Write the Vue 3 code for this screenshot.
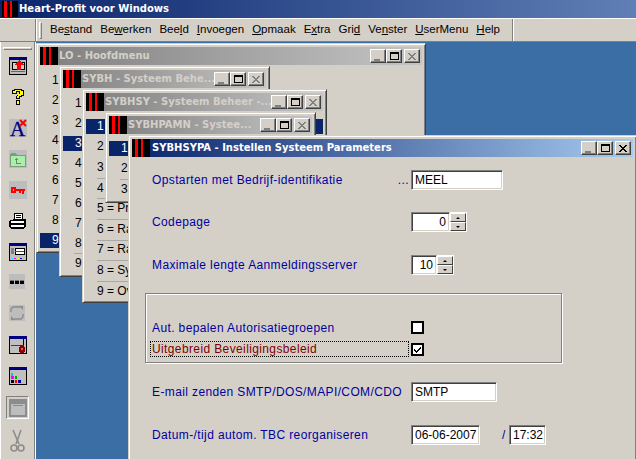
<script setup>
const menus = [
  ['Be', 's', 'tand'], ['Be', 'w', 'erken'], ['Bee', 'l', 'd'], ['', 'I', 'nvoegen'], ['', 'O', 'pmaak'],
  ['E', 'x', 'tra'], ['Gri', 'd', ''], ['Ve', 'n', 'ster'], ['', 'U', 'serMenu'], ['', 'H', 'elp']
]
const nums = (active, seps = [], extra = {}) =>
  [1, 2, 3, 4, 5, 6, 7, 8, 9].map(n => ({ t: extra[n] || String(n), on: n === active, sep: seps.includes(n) }))
const windows = [
  { id: 'lo', title: 'LO - Hoofdmenu', rows: nums(9) },
  { id: 'sybh', title: 'SYBH - Systeem Behe...', rows: nums(3, [9]) },
  { id: 'sybhsy', title: 'SYBHSY - Systeem Beheer -...', rows: nums(1, [4, 5, 6, 7, 8, 9], { 5: '5 = Pr', 6: '6 = Ra', 7: '7 = Ra', 8: '8 = Sy', 9: '9 = Ov' }) },
  { id: 'pamn', title: 'SYBHPAMN - Systee...', rows: nums(1, [3]).slice(0, 3) }
]
</script>

<template>
  <div class="screen">
    <header class="apptitle">
      <span class="logo small"><i></i><i></i></span>
      <span class="apptext">Heart-Profit voor Windows</span>
    </header>

    <nav class="menubar">
      <div class="menu-gutter"></div>
      <div class="menu-main">
        <span class="grip"></span>
        <span v-for="m in menus" :key="m.join('')" class="menu">{{ m[0] }}<u>{{ m[1] }}</u>{{ m[2] }}</span>
      </div>
      <div class="menu-rest"></div>
    </nav>

    <div class="workspace">
      <aside class="toolbar">
        <span class="hgrip"></span>
        <svg class="ico i1" viewBox="0 0 18 18" shape-rendering="crispEdges">
          <rect width="18" height="18" fill="#000"/><rect x="1" y="1" width="16" height="16" fill="#bdbdbd"/>
          <rect width="18" height="3" fill="#000080"/>
          <rect x="3" y="5" width="13" height="8" fill="#000"/><rect x="4" y="6" width="11" height="6" fill="#d4d0c8"/>
          <path d="M10 3l5 5h-3v5H8V8H5z" fill="#f00"/>
          <rect x="2" y="14" width="14" height="1" fill="#666"/>
        </svg>
        <svg class="ico i2" viewBox="0 0 18 18" shape-rendering="crispEdges">
          <path d="M5 1h8v1h2v6h-2v1h-2v2H7V8h1V7h2V4H8v2H3V2h2zM7 12h4v5H7z" fill="#000"/>
          <path d="M6 2h6v1h2v4h-2v1h-2v2H8V8h1V6h2V3H7v2H4V3h2zM8 13h2v3H8z" fill="#ff0"/>
        </svg>
        <svg class="ico i3" viewBox="0 0 18 18">
          <rect width="18" height="18" fill="#bdbdbd"/>
          <text x="1" y="17" class="glyph">A</text>
          <path d="M11 1l6 6M17 1l-6 6" stroke="#f00" stroke-width="2"/>
        </svg>
        <svg class="ico i4" viewBox="0 0 18 18" shape-rendering="crispEdges">
          <rect width="18" height="18" fill="#bdbdbd"/>
          <path d="M1 4h1V3h5v1h1v1h9v12H1z" fill="#7f9a7f"/><path d="M2 6h14v10H2z" fill="#a8f0a8"/>
          <path d="M7 8h1v1h1v1H8v3h4v1H7v-4H6v-1h1z" fill="#6a8a6a"/>
        </svg>
        <svg class="ico i5" viewBox="0 0 18 18" shape-rendering="crispEdges">
          <rect width="18" height="18" fill="#bdbdbd"/>
          <path d="M2 6h5v2h9v2h-1v3h-2v-3h-1v2h-2v-2H7v2H2zM4 8v2h1V8z" fill="#f00" fill-rule="evenodd"/>
        </svg>
        <svg class="ico i6" viewBox="0 0 18 18" shape-rendering="crispEdges">
          <path d="M5 1h9v6h3v8l-3 2H3l-3-2V9l5-2z" fill="#000"/>
          <path d="M6 2h7v5H6zM2 9h13v2H2zM2 13h13v2H2z" fill="#fff"/>
          <path d="M7 3h5v1H7zM7 5h5v1H7z" fill="#000"/>
        </svg>
        <svg class="ico i7" viewBox="0 0 18 18" shape-rendering="crispEdges">
          <rect width="18" height="18" fill="#000"/><rect x="1" y="3" width="16" height="14" fill="#c0c0c0"/>
          <rect width="18" height="3" fill="#000080"/>
          <rect x="6" y="5" width="10" height="7" fill="#000"/><rect x="7" y="6" width="8" height="5" fill="#fff"/>
          <rect x="2" y="5" width="3" height="6" fill="#808080"/>
          <rect x="6" y="8" width="9" height="1" fill="#f00"/>
          <path d="M2 15h2v1H2z" fill="#0ff"/><path d="M5 15h2v1H5z" fill="#f0f"/><path d="M8 15h2v1H8z" fill="#ff0"/><path d="M11 15h2v1h-2z" fill="#00f"/>
        </svg>
        <svg class="ico i8" viewBox="0 0 18 18" shape-rendering="crispEdges">
          <rect y="0" width="16" height="15" fill="#bdbdbd"/>
          <rect x="1" y="6" width="4" height="4" fill="#000"/><rect x="6" y="6" width="4" height="4" fill="#000"/><rect x="11" y="6" width="4" height="4" fill="#000"/>
          <rect x="1" y="6" width="4" height="1" fill="#777"/><rect x="6" y="6" width="4" height="1" fill="#777"/><rect x="11" y="6" width="4" height="1" fill="#777"/>
        </svg>
        <svg class="ico i9" viewBox="0 0 18 18">
          <rect width="16" height="16" fill="#bdbdbd"/>
          <path d="M2 7V4l2-2h7M14 9v3l-2 2H5" fill="none" stroke="#8c8c8c" stroke-width="1.4"/>
          <path d="M10 1l4 0v4zM6 15l-4 0v-4z" fill="#8c8c8c"/>
        </svg>
        <svg class="ico i10" viewBox="0 0 18 18" shape-rendering="crispEdges">
          <rect width="18" height="18" fill="#000"/><rect x="1" y="3" width="16" height="14" fill="#c0c0c0"/>
          <rect width="18" height="3" fill="#000080"/>
          <rect x="2" y="9" width="13" height="1" fill="#d00000"/>
          <rect x="14" y="3" width="1" height="8" fill="#000"/>
          <path d="M11 9h4v2h1v5h-1v1h-4v-1h-1v-5h1z" fill="#900000"/>
          <rect x="12" y="12" width="2" height="2" fill="#f06060"/>
        </svg>
        <svg class="ico i11" viewBox="0 0 18 18" shape-rendering="crispEdges">
          <rect width="18" height="18" fill="#000"/><rect x="1" y="3" width="16" height="14" fill="#c0c0c0"/>
          <rect width="18" height="2" fill="#000080"/>
          <rect x="2" y="6" width="2" height="3" fill="#0cc"/>
          <rect x="2" y="9" width="3" height="3" fill="#f0f"/><rect x="6" y="9" width="2" height="3" fill="#0a0"/>
          <rect x="2" y="13" width="3" height="3" fill="#000"/><rect x="6" y="13" width="2" height="3" fill="#f00"/><rect x="9" y="13" width="3" height="3" fill="#00a"/>
        </svg>
        <span class="pressed">
          <svg class="ico12" viewBox="0 0 18 18" shape-rendering="crispEdges">
            <rect width="18" height="18" fill="#8c8c8c"/><rect x="2" y="3" width="14" height="13" fill="#bdbdbd"/>
            <rect x="2" y="3" width="14" height="2" fill="#8c8c8c"/><rect x="4" y="6" width="10" height="1" fill="#8c8c8c"/>
          </svg>
        </span>
        <svg class="ico i13" viewBox="0 0 18 26">
          <path d="M4 1l6 14M12 1L7 15" stroke="#8c8c8c" stroke-width="1.6" fill="none"/>
          <circle cx="5" cy="19" r="3" fill="none" stroke="#8c8c8c" stroke-width="1.6"/>
          <circle cx="12" cy="19" r="3" fill="none" stroke="#8c8c8c" stroke-width="1.6"/>
        </svg>
      </aside>

      <main class="mdi">
        <section v-for="w in windows" :key="w.id" class="win inactive" :class="w.id">
          <div class="wtitle">
            <span class="logo"><i></i><i></i></span>
            <span class="wtext">{{ w.title }}</span>
            <span class="btns">
              <span class="cbtn"><b class="min"></b></span>
              <span class="cbtn"><b class="max"></b></span>
              <span class="cbtn close"><svg viewBox="0 0 8 7" width="8" height="7" shape-rendering="crispEdges"><path d="M0 0h2v1h1v1h2V1h1V0h2v1H7v1H6v1H5v1h1v1h1v1h1v1H6V6H5V5H3v1H2v1H0V6h1V5h1V4h1V3H2V2H1V1H0z"/></svg></span>
            </span>
          </div>
          <ul class="rows">
            <li v-for="r in w.rows" :key="r.t" class="row" :class="{ sep: r.sep }">
              <span class="cell" :class="{ on: r.on }">{{ r.t }}</span>
            </li>
          </ul>
        </section>

        <section class="win active sypa">
          <div class="wtitle">
            <span class="logo"><i></i><i></i></span>
            <span class="wtext">SYBHSYPA - Instellen Systeem Parameters</span>
            <span class="btns">
              <span class="cbtn"><b class="min"></b></span>
              <span class="cbtn"><b class="max"></b></span>
              <span class="cbtn close"><svg viewBox="0 0 8 7" width="8" height="7" shape-rendering="crispEdges"><path d="M0 0h2v1h1v1h2V1h1V0h2v1H7v1H6v1H5v1h1v1h1v1h1v1H6V6H5V5H3v1H2v1H0V6h1V5h1V4h1V3H2V2H1V1H0z"/></svg></span>
            </span>
          </div>
          <form class="form" @submit.prevent>
            <div class="frow f1">
              <span class="lbl">Opstarten met Bedrijf-identifikatie<em>...</em></span>
              <span class="field w92">MEEL</span>
            </div>
            <div class="frow f2">
              <span class="lbl">Codepage</span>
              <span class="field w39 num">0</span>
              <span class="spin"><span class="sbtn"><s class="up"></s></span><span class="sbtn"><s class="down"></s></span></span>
            </div>
            <div class="frow f3">
              <span class="lbl">Maximale lengte Aanmeldingsserver</span>
              <span class="field w26 num">10</span>
              <span class="spin"><span class="sbtn"><s class="up"></s></span><span class="sbtn"><s class="down"></s></span></span>
            </div>
            <fieldset class="group">
              <div class="grow">
                <span class="lbl">Aut. bepalen Autorisatiegroepen</span>
                <span class="check"></span>
              </div>
              <div class="grow focus">
                <span class="lbl red">Uitgebreid Beveiligingsbeleid</span>
                <span class="check">
                  <svg viewBox="0 0 9 9" width="9" height="9" shape-rendering="crispEdges"><path d="M1 4h1v1h1v1h1V5h1V4h1V3h1V2h1v2H7v1H6v1H5v1H4v1H3V7H2V6H1z" fill="#000"/></svg>
                </span>
              </div>
            </fieldset>
            <div class="frow f4">
              <span class="lbl">E-mail zenden SMTP/DOS/MAPI/COM/CDO</span>
              <span class="field w86">SMTP</span>
            </div>
            <div class="frow f5">
              <span class="lbl">Datum-/tijd autom. TBC reorganiseren</span>
              <span class="field w69">06-06-2007</span>
              <span class="slash">/</span>
              <span class="field w37">17:32</span>
            </div>
          </form>
        </section>
      </main>
    </div>
  </div>
</template>

<style scoped>
.screen {
  width: 636px; height: 459px; overflow: hidden; display: flex; flex-direction: column;
  background: #d4d0c8; font: 12px/1 "Liberation Sans", Arial, sans-serif; color: #000;
}
.apptitle {
  height: 18px; flex: none; display: flex; align-items: center; padding-left: 2px; gap: 1px;
  background: linear-gradient(90deg, #0a246a 0, #5f7fb6 636px);
}
.apptext, .wtext { font: bold 10px/1 "DejaVu Sans", sans-serif; color: #fff; white-space: nowrap; }
.logo { width: 18px; height: 18px; background: #000; flex: none; display: flex; gap: 3px; padding-left: 3px; box-sizing: border-box; }
.logo i { width: 2.5px; background: #f00; display: block; }
.logo.small { height: 16px; width: 16px; padding-left: 2px; }
.menubar { height: 24px; flex: none; display: flex; border-top: 1px solid #fff; border-bottom: 1px solid #808080; box-sizing: border-box; }
.menu-gutter { width: 35px; border-right: 1px solid #808080; flex: none; }
.menu-main { width: 477px; flex: none; display: flex; align-items: center; border-left: 1px solid #fff; border-right: 1px solid #808080; padding-left: 2px; gap: 8px; box-sizing: border-box; font-size: 11.5px; }
.menu-rest { flex: 1; border-left: 1px solid #fff; }
.grip { width: 1px; height: 15px; border: 1px solid; border-color: #fff #808080 #808080 #fff; margin-right: 0; }
.menu { white-space: nowrap; }
.workspace { flex: 1; display: flex; min-height: 0; }
.toolbar {
  width: 35px; flex: none; box-sizing: border-box; position: relative; display: flex; flex-direction: column; align-items: center;
  border-left: 1px solid #fff; border-right: 1px solid #808080; padding-top: 5px;
}
.hgrip { width: 27px; height: 1px; border: 1px solid; border-color: #fff #808080 #808080 #fff; flex: none; margin-bottom: 7px; }
.ico { width: 18px; height: 18px; flex: none; margin-bottom: 13px; }
.glyph { font: 21px "Liberation Serif", serif; fill: #000080; stroke: #000080; stroke-width: .3px; }
.pressed { width: 23px; height: 23px; box-sizing: border-box; border: 1px solid; border-color: #808080 #fff #fff #808080; display: flex; align-items: center; justify-content: center; flex: none; margin: -2px 0 10px; }
.ico12 { width: 18px; height: 18px; }
.i13 { height: 26px; }
.mdi { flex: 1; position: relative; background: #3a6ea5; border-left: 1px solid #fff; }
.win {
  position: absolute; box-sizing: border-box; background: #d4d0c8; padding: 3px;
  border: 1px solid; border-color: #d4d0c8 #404040 #404040 #d4d0c8;
  box-shadow: inset 1px 1px #fff, inset -1px -1px #808080; overflow: hidden;
}
.wtitle { height: 18px; display: flex; align-items: center; padding-right: 2px; }
.wtext { margin-left: 1px; flex: 1; min-width: 0; }
.inactive .wtitle { background: linear-gradient(90deg, #808080, #c4c4c4); }
.inactive .wtext { color: #d4d0c8; }
.active .wtitle { background: linear-gradient(90deg, #0a246a, #a6caf0); }
.btns { display: flex; flex: none; }
.cbtn {
  width: 16px; height: 14px; box-sizing: border-box; position: relative; background: #d4d0c8; display: flex; align-items: center; justify-content: center;
  border: 1px solid; border-color: #fff #404040 #404040 #fff; box-shadow: inset -1px -1px #808080;
  color: #000;
}
.cbtn svg { fill: #000; }
.cbtn.close { margin-left: 2px; }
.inactive .cbtn.close svg { fill: #808080; }
.min { width: 6px; height: 2px; background: #808080; margin: 7px 3px 0 0; }
.max { width: 9px; height: 8px; box-sizing: border-box; border: 1px solid #000; border-top-width: 2px; }
.rows { list-style: none; margin: 5px 0 0; padding: 0; }
.row { display: flex; align-items: center; height: 20px; white-space: nowrap; }
.row.sep { background: linear-gradient(#a8a8a8, #a8a8a8) 11px 0 / 100% 1px no-repeat; }
.cell { flex: 1; height: 15px; line-height: 15px; padding-left: 12px; }
.cell.on { background: #0a246a; color: #fff; }
.lo { left: 0; top: 1px; width: 390px; height: 210px; }
.sybh { left: 23px; top: 24px; width: 211px; height: 211px; }
.sybhsy { left: 46px; top: 47px; width: 245px; height: 214px; }
.sybhsy .row { height: 20.6px; }
.sybhsy .cell { padding-left: 11px; }
.pamn { left: 69px; top: 70px; width: 211px; height: 91px; }
.pamn .row { height: 20.5px; }
.pamn .rows { margin-top: 4px; }
.sypa { left: 92px; top: 93px; width: 509px; height: 340px; }
.sypa .wtext { margin-left: 2px; }
.form { padding: 13px 0 0 20px; color: #0000a0; }
.frow { display: flex; height: 20px; align-items: center; }
.f2 { margin-top: 22px; }
.f3 { margin-top: 23px; }
.f4 { margin-top: 19px; }
.f5 { margin-top: 23px; }
.lbl { width: 259px; flex: none; display: flex; justify-content: space-between; white-space: nowrap; letter-spacing: .38px; }
.lbl em { font-style: normal; color: #0000a0; padding-right: 2px; }
.red { color: #800000; }
.field {
  height: 20px; box-sizing: border-box; background: #fff; color: #000; display: flex; align-items: center; padding: 0 3px; white-space: nowrap;
  border: 1px solid; border-color: #808080 #fff #fff #808080; box-shadow: inset 1px 1px #404040, inset -1px -1px #d4d0c8; flex: none;
}
.num { justify-content: flex-end; }
.w92 { width: 92px; } .w39 { width: 39px; } .w26 { width: 26px; } .w86 { width: 86px; } .w69 { width: 69px; } .w37 { width: 37px; }
.spin { width: 17px; height: 20px; display: flex; flex-direction: column; justify-content: center; gap: 0; flex: none; box-sizing: border-box; padding: 1px 1px 1px 0; background: #fff; margin-left: 0; }
.sbtn { height: 9px; flex: 1; background: #d4d0c8; box-sizing: border-box; border: 1px solid; border-color: #fff #404040 #404040 #fff; display: flex; align-items: center; justify-content: center; }
s { display: block; width: 0; height: 0; border-left: 2px solid transparent; border-right: 2px solid transparent; }
s.up { border-bottom: 2px solid #000; }
s.down { border-top: 2px solid #000; }
.slash { margin-left: 22px; width: 7px; flex: none; color: #0000a0; }
.group { margin: 18px 0 0 -7px; padding: 27px 0 0 4px; width: 417px; height: 70px; box-sizing: border-box; border: 1px solid #808080; box-shadow: 1px 1px #fff, inset 1px 1px #fff; min-width: 0; }
.grow { display: flex; align-items: center; height: 13px; }
.grow .lbl { padding-left: 2px; box-sizing: border-box; }
.grow.focus { height: 16px; margin-top: 7px; position: relative; }
.grow.focus .lbl { height: 16px; align-items: center; outline: 1px dotted #000; outline-offset: -1px; }
.check { width: 13px; height: 13px; margin-left: 2px; box-sizing: border-box; border: 2px solid #000; background: #fff; display: flex; align-items: center; justify-content: center; flex: none; }
</style>
